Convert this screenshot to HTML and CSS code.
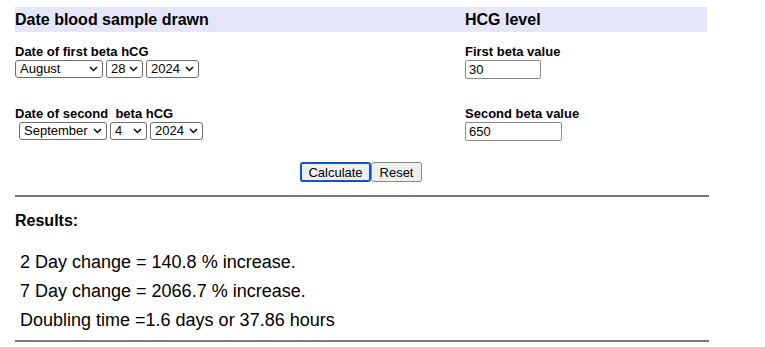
FILE: index.html
```html
<!DOCTYPE html>
<html>
<head>
<meta charset="utf-8">
<link rel="stylesheet" href="styles.css">
</head>
<body>
<div class="page">
  <div class="grid">
    <div class="head">Date blood sample drawn</div>
    <div class="head">HCG level</div>

    <div class="field">
      <div class="label">Date of first beta hCG</div>
      <div class="row">
        <select class="sel w-month"><option>August</option></select>
        <select class="sel w-day"><option>28</option></select>
        <select class="sel w-year"><option>2024</option></select>
      </div>
    </div>
    <div class="field">
      <div class="label">First beta value</div>
      <input class="txt w-in1" type="text" value="30">
    </div>

    <div class="field second">
      <div class="label">Date of second&nbsp; beta hCG</div>
      <div class="row indent">
        <select class="sel w-month"><option>September</option></select>
        <select class="sel w-day"><option>4</option></select>
        <select class="sel w-year2"><option>2024</option></select>
      </div>
    </div>
    <div class="field second">
      <div class="label">Second beta value</div>
      <input class="txt w-in2" type="text" value="650">
    </div>
  </div>

  <div class="actions">
    <button class="btn focused">Calculate</button><button class="btn">Reset</button>
  </div>

  <hr class="rule">

  <div class="results-title">Results:</div>
  <div class="results">
    <p>2 Day change = 140.8 % increase.</p>
    <p>7 Day change = 2066.7 % increase.</p>
    <p>Doubling time =1.6 days or 37.86 hours</p>
  </div>

  <hr class="rule bottom">
</div>
</body>
</html>
```

FILE: styles.css
```css
html, body {
  margin: 0;
  padding: 0;
  background: #fff;
}
body {
  font-family: "Liberation Sans", Arial, sans-serif;
  color: #000;
}
.page {
  width: 694px;
  padding: 7px 0 0 15px;
}
.grid {
  display: grid;
  grid-template-columns: 450px 242px;
}
.head {
  background: #e6e6fa;
  font-weight: bold;
  font-size: 16px;
  height: 25px;
  line-height: 25px;
}
.field {
  padding-top: 12px;
}
.field.second {
  padding-top: 27px;
}
.label {
  font-weight: bold;
  font-size: 13px;
  line-height: 15px;
  height: 15px;
  margin-bottom: 1px;
}
.row {
  display: flex;
  gap: 3px;
}
.row.indent {
  padding-left: 4px;
}
.sel {
  appearance: none;
  -webkit-appearance: none;
  font-family: "Liberation Sans", Arial, sans-serif;
  font-size: 13px;
  height: 18px;
  line-height: 16px;
  margin: 0;
  padding: 0 14px 0 4px;
  border: 1px solid #6e6e6e;
  border-radius: 3px;
  color: #000;
  background: #fff url("data:image/svg+xml,%3Csvg xmlns='http://www.w3.org/2000/svg' width='9' height='6' viewBox='0 0 9 6'%3E%3Cpath d='M1 1 L4.5 4.5 L8 1' fill='none' stroke='%23000' stroke-width='1.5'/%3E%3C/svg%3E") no-repeat right 4px center;
}
.w-month { width: 88px; }
.w-day { width: 37px; }
.w-year { width: 53px; }
.w-year2 { width: 53px; }
.txt {
  font-family: "Liberation Sans", Arial, sans-serif;
  font-size: 13px;
  height: 19px;
  box-sizing: border-box;
  margin: 0;
  padding: 0 3px;
  border: 1px solid #8a8a8a;
  border-radius: 2px;
  display: block;
}
.w-in1 { width: 76px; }
.w-in2 { width: 97px; }
.actions {
  display: flex;
  justify-content: center;
  padding-top: 21px;
  padding-right: 2px;
}
.btn {
  font-family: "Liberation Sans", Arial, sans-serif;
  font-size: 13px;
  height: 20px;
  margin: 0;
  padding: 0 6px;
  background: #efefef;
  border: 1px solid #8a8a8a;
  border-radius: 3px;
  color: #000;
}
.btn.focused {
  border: 2px solid #0b57d0;
  padding: 0 5px;
  width: 71px;
}
.btn + .btn {
  width: 51px;
}
.rule {
  border: 0;
  border-top: 2px solid #7a7a7a;
  margin: 13px 0 0 0;
  height: 0;
  width: 694px;
}
.results-title {
  font-weight: bold;
  font-size: 16px;
  margin-top: 15px;
  line-height: 18px;
}
.results {
  padding-left: 5px;
  padding-top: 18px;
}
.results p {
  margin: 0;
  font-size: 18px;
  line-height: 29px;
}
.rule.bottom {
  margin-top: 5px;
}
```
